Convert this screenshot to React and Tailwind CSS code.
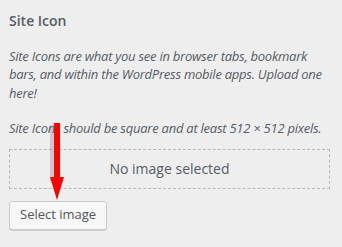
export default function App() {
  return (
    <div className="w-[342px] h-[247px] overflow-hidden bg-[#eeeeee] px-[9px] pt-[12px] text-[#555d66] font-['Open_Sans',sans-serif]">
      <h2 className="text-[14px] leading-[18px] font-semibold">Site Icon</h2>
      <p className="mt-[17px] text-[13px] leading-[18.4px] italic tracking-[-0.25px] w-[324px]">
        Site Icons are what you see in browser tabs, bookmark bars, and within the WordPress mobile apps. Upload one here!
      </p>
      <div className="relative mt-[17px]">
        <p className="text-[13px] leading-[18.4px] italic tracking-[-0.25px] whitespace-nowrap">
          Site Icons should be square and at least 512 × 512 pixels.
        </p>
        <div className="mt-[11px] w-[321px] h-[40px] border border-dashed border-[#b4b9be] flex items-center justify-center text-[14px]">
          No image selected
        </div>
        <button className="mt-[12px] h-[29px] px-[10px] rounded-[3px] border border-[#cccccc] bg-[#f7f7f7] shadow-[0_1px_0_#cccccc] text-[13px] text-[#555555]">
          Select image
        </button>
        <svg className="absolute left-[32px] top-[4px]" width="24" height="78" viewBox="0 0 24 78">
          <rect x="9" y="2" width="6" height="56" fill="#777" opacity="0.3" />
          <rect x="13" y="0" width="6" height="56" fill="#ff0000" />
          <polygon points="9,54 23,54 16,77" fill="#ff0000" />
        </svg>
      </div>
    </div>
  );
}
